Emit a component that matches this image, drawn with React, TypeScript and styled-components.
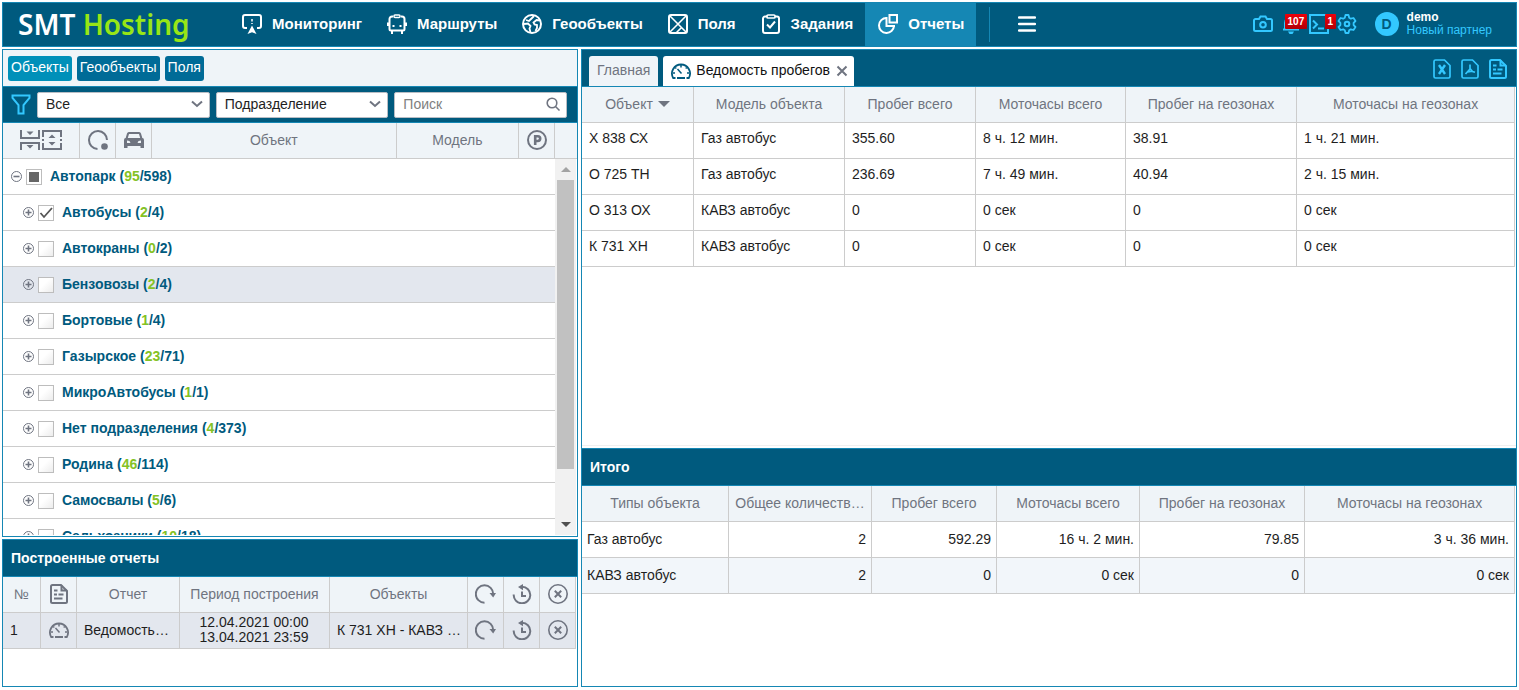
import React, { useEffect, useRef } from "react";
import styled, { createGlobalStyle, css } from "styled-components";

const c = {
  dark: "#005a7e",
  line: "#1587b4",
  head: "#eff4f8",
  grid: "#cccccc",
  mute: "#6f7480",
  sky: "#33c8ff",
  green: "#84c225",
};

const GlobalStyle = createGlobalStyle`
  *, *::before, *::after { box-sizing: border-box; }
  body {
    margin: 0;
    background: #fff;
    color: #1e1e1e;
    font: 14px/16px "Liberation Sans", Arial, sans-serif;
  }
  button, input, select { font: inherit; margin: 0; }
`;

/* ---------- layout ---------- */

const Page = styled.div`
  display: flex;
  flex-direction: column;
  gap: 2px;
  height: 100vh;
  min-height: 560px;
  padding: 2px 2px 3px;
`;

const Columns = styled.main`
  flex: 1;
  min-height: 0;
  display: grid;
  grid-template-columns: 8fr 13fr;
  gap: 3px;
`;

const Column = styled.div`
  display: flex;
  flex-direction: column;
  gap: 2px;
  min-width: 0;
  min-height: 0;
`;

const Panel = styled.section<{ $grow?: boolean }>`
  display: flex;
  flex-direction: column;
  min-width: 0;
  min-height: ${(p) => (p.$grow ? "0" : "148px")};
  flex: ${(p) => (p.$grow ? "1 1 0" : "none")};
  border: 1px solid ${c.line};
  background: #fff;
`;

const PanelTitle = styled.h2`
  margin: 0;
  padding: 0 8px;
  background: ${c.dark};
  border-bottom: 1px solid ${c.line};
  color: #fff;
  font-size: 14px;
  font-weight: bold;
  line-height: 36px;
`;

/* ---------- header ---------- */

const Header = styled.header`
  display: flex;
  align-items: stretch;
  height: 45px;
  background: ${c.dark};
  border: 1px solid ${c.line};
`;

const Logo = styled.a`
  width: 226px;
  padding-left: 15px;
  color: #fff;
  font: 600 28px/42px "Noto Sans", sans-serif;
  text-decoration: none;
  white-space: nowrap;

  span { color: #97e616; }
`;

const Nav = styled.nav`
  display: flex;
`;

const NavItem = styled.a<{ $active?: boolean }>`
  display: flex;
  align-items: center;
  gap: 10px;
  padding: 0 12px 2px 13px;
  background: ${(p) => (p.$active ? c.line : "transparent")};
  color: #fff;
  font-size: 15px;
  font-weight: bold;
  line-height: 20px;
  text-decoration: none;
`;

const Divider = styled.span`
  width: 1px;
  margin: 4px 0 4px 13px;
  background: ${c.line};
`;

const IconButton = styled.button<{ $color?: string }>`
  position: relative;
  display: flex;
  align-items: center;
  justify-content: center;
  padding: 0;
  border: 0;
  background: none;
  color: ${(p) => p.$color || c.sky};
  cursor: pointer;
`;

const MenuButton = styled(IconButton)`
  margin: 0 0 2px 28px;
`;

const Tools = styled.div`
  display: flex;
  align-items: center;
  gap: 8px;
  margin-left: auto;
  padding-bottom: 2px;
`;

const Badge = styled.span<{ $left: number }>`
  position: absolute;
  left: ${(p) => p.$left}px;
  top: 0;
  padding: 0 3px;
  border-radius: 1px;
  background: linear-gradient(#f0000a, #b00006);
  color: #fff;
  font-size: 10px;
  font-weight: bold;
  line-height: 15px;
`;

const Profile = styled.a`
  display: flex;
  align-items: center;
  gap: 8px;
  margin: 0 24px 0 18px;
  padding-bottom: 2px;
  color: ${c.sky};
  font-size: 12px;
  line-height: 13px;
  text-decoration: none;

  strong { display: block; color: #fff; }
`;

const Avatar = styled.span`
  width: 24px;
  height: 24px;
  border-radius: 50%;
  background: ${c.sky};
  color: ${c.dark};
  font-size: 14px;
  font-weight: bold;
  line-height: 24px;
  text-align: center;
`;

/* ---------- objects panel ---------- */

const TabStrip = styled.div`
  display: flex;
  gap: 5px;
  padding: 6px 5px 5px;
  background: ${c.head};
  border-bottom: 1px solid ${c.line};
`;

const PillTab = styled.button<{ $active?: boolean }>`
  height: 25px;
  padding: 0 3px 3px;
  border: 0;
  border-radius: 3px;
  background: ${(p) => (p.$active ? "#0090b9" : "#006b97")};
  color: #fff;
  line-height: 22px;
  cursor: pointer;
`;

const FilterBar = styled.div`
  display: flex;
  align-items: center;
  gap: 6px;
  height: 36px;
  padding: 0 10px 0 8px;
  background: ${c.dark};
  border-bottom: 1px solid ${c.line};
`;

const Field = styled.label`
  position: relative;
  flex: 1 1 0;
  min-width: 0;
  color: ${c.mute};

  svg {
    position: absolute;
    right: 6px;
    top: 4px;
    pointer-events: none;
  }
`;

const fieldBox = css`
  display: block;
  width: 100%;
  height: 26px;
  padding: 0 24px 2px 8px;
  border: 1px solid #b9bdc4;
  border-radius: 2px;
  background: #fff;
  color: #1e1e1e;
  appearance: none;
`;

const Select = styled.select`${fieldBox}`;
const Search = styled.input`
  ${fieldBox}
  &::placeholder { color: #808080; opacity: 1; }
`;

const TreeHead = styled.div`
  display: grid;
  grid-template-columns: 77px 36px 36px 2fr 1fr 36px 22px;
  height: 36px;
  background: ${c.head};
  border-bottom: 1px solid ${c.grid};
  color: ${c.mute};
`;

const TreeHeadCell = styled.div`
  display: flex;
  align-items: center;
  justify-content: center;
  padding-bottom: 2px;
  border-right: 1px solid ${c.grid};

  &:last-child { border-right: 0; }
`;

const TreeArea = styled.div`
  flex: 1;
  min-height: 0;
  display: flex;
  padding: 0 1px 1px 0;
`;

const Tree = styled.ul`
  flex: 1;
  margin: 0;
  padding: 0;
  overflow: hidden;
  list-style: none;
`;

const TreeRow = styled.li<{ $level: number; $hover?: boolean }>`
  display: flex;
  align-items: center;
  gap: 4px;
  height: 36px;
  padding-left: ${(p) => 8 + p.$level * 12}px;
  border-bottom: 1px solid ${c.grid};
  background: ${(p) => (p.$hover ? "#e3e7ee" : "#fff")};
`;

const TreeLabel = styled.label`
  display: flex;
  align-items: center;
  gap: 8px;
  color: ${c.dark};
  font-weight: bold;

  span { padding-bottom: 2px; }
  em { color: ${c.green}; font-style: normal; }
`;

const CheckBox = styled.input`
  width: 16px;
  height: 16px;
  border: 1px solid #bdbdbd;
  background: linear-gradient(135deg, #fff 40%, #ececec);
  appearance: none;

  &:checked {
    background: url("data:image/svg+xml,%3Csvg xmlns='http://www.w3.org/2000/svg' viewBox='0 0 14 14'%3E%3Cpath d='M1.5 7l3.5 4L13 2' fill='none' stroke='%23555' stroke-width='1.8'/%3E%3C/svg%3E");
  }
  &:indeterminate {
    background: linear-gradient(#666, #666) center / 10px 10px no-repeat #fff;
  }
`;

const ScrollTrack = styled.div`
  display: flex;
  flex-direction: column;
  width: 21px;
  padding: 0 2px;
  background: #f1f1f1;
`;

const ScrollArrow = styled.span<{ $down?: boolean }>`
  height: 21px;
  display: flex;
  align-items: center;
  justify-content: center;

  &::after {
    content: "";
    border: 5px solid transparent;
    ${(p) =>
      p.$down
        ? "border-top-color: #505050; border-bottom: 0;"
        : "border-bottom-color: #a3a3a3; border-top: 0;"}
  }
`;

const ScrollThumb = styled.span`
  flex: 13;
  background: #c1c1c1;
`;

const ScrollRest = styled.span`
  flex: 2;
`;

/* ---------- tables ---------- */

const Table = styled.table`
  width: calc(100% - 1px);
  border-collapse: separate;
  border-spacing: 0;
  table-layout: fixed;
`;

const cell = css`
  height: 36px;
  border-right: 1px solid ${c.grid};
  border-bottom: 1px solid ${c.grid};
  overflow: hidden;
  text-overflow: ellipsis;
  white-space: nowrap;

  svg { display: block; margin: 0 auto; }
  button { margin: 0 auto; }
`;

const Th = styled.th`
  ${cell}
  padding: 0 5px 2px;
  background: ${c.head};
  color: ${c.mute};
  font-weight: normal;
  text-align: center;
`;

const SortMark = styled.span`
  display: inline-block;
  margin-left: 5px;
  border: 6px solid transparent;
  border-top-color: ${c.mute};
  border-bottom: 0;
  vertical-align: 2px;
`;

const Td = styled.td<{ $align?: string; $tight?: boolean; $raised?: boolean }>`
  ${cell}
  padding: ${(p) => (p.$raised ? "0 7px 5px" : p.$tight ? "0 5px 2px" : "0 8px 2px 7px")};
  text-align: ${(p) => p.$align || "left"};
  color: #1e1e1e;
`;

const ObjectsTd = styled(Td)`
  padding-right: 5px;
`;

const IconTd = styled(Td)`
  padding: 0 0 2px;
  color: ${c.mute};
`;

const IconTh = styled(Th)`
  padding: 0 0 2px;
`;

const Row = styled.tr<{ $bg?: string }>`
  background: ${(p) => p.$bg || "#fff"};
`;

const Period = styled.div`
  line-height: 15px;
`;

/* ---------- report panel ---------- */

const ReportBar = styled.div`
  display: flex;
  align-items: flex-end;
  gap: 5px;
  height: 37px;
  padding: 0 8px 0 7px;
  background: ${c.dark};
  border-bottom: 1px solid ${c.line};
`;

const ReportTab = styled.div<{ $active?: boolean }>`
  display: flex;
  align-items: center;
  gap: 5px;
  height: 30px;
  padding: 0 ${(p) => (p.$active ? 5 : 8)}px 0 8px;
  border-radius: 3px 3px 0 0;
  background: ${(p) => (p.$active ? "#fff" : c.head)};
  color: ${(p) => (p.$active ? c.dark : c.mute)};
`;

const TabButton = styled.button<{ $active?: boolean }>`
  padding: 0 0 2px;
  border: 0;
  background: none;
  color: ${(p) => (p.$active ? "#111" : c.mute)};
  cursor: pointer;
`;

const Exports = styled.div`
  display: flex;
  gap: 8px;
  margin: 0 0 7px auto;
`;

const ReportBody = styled.div`
  flex: 1;
  min-height: 0;
  margin-bottom: 2px;
  border-bottom: 1px solid #f0f0f0;
  overflow: hidden;
`;

const Totals = styled.div`
  min-height: 238px;
  border-top: 1px solid ${c.line};
`;

/* ---------- icons ---------- */

type IconProps = { w?: number; h?: number; sw?: number; children: React.ReactNode };
const Icon = ({ w = 20, h = 20, sw = 2, children }: IconProps) => (
  <svg width={w} height={h} viewBox={`0 0 ${w} ${h}`} fill="none" stroke="currentColor" strokeWidth={sw} aria-hidden="true">
    {children}
  </svg>
);

const MonitorIcon = () => (
  <Icon>
    <path d="M5 14H3a2 2 0 0 1-2-2V3a2 2 0 0 1 2-2h14a2 2 0 0 1 2 2v9a2 2 0 0 1-2 2h-2" />
    <path d="M10 5v2.500M10 9v1" strokeWidth="1.500" />
    <path d="M10 11.500l4.500 8.500L10 18.200 5.500 20z" fill="currentColor" stroke="none" />
  </Icon>
);
const BusIcon = () => (
  <Icon>
    <path d="M6 2.500H5A2.500 2.500 0 0 0 2.500 5v10A1.500 1.500 0 0 0 4 16.500h12a1.500 1.500 0 0 0 1.500-1.500V5A2.500 2.500 0 0 0 15 2.500h-1" />
    <rect x="7" y="1" width="6" height="2.500" rx="1" strokeWidth="1.600" />
    <path d="M1 8.500v3.500M19 8.500v3.500M5 17v3M15 17v3" />
    <path d="M5.500 12h2M12.500 12h2" />
  </Icon>
);
const GlobeIcon = () => (
  <Icon>
    <circle cx="10" cy="10" r="9" />
    <path
      d="M2 10l4-.5 2.500 2.500-1 2.500 1 4M4 6l3 1 2.500-2.500L12 2M18 6.500l-3.500-.5-3 2.500 1 2 2.500.5v3l-1.500 3"
      strokeWidth="1.800"
    />
  </Icon>
);
const FieldIcon = () => (
  <Icon>
    <rect x="1" y="1" width="18" height="18" rx="2" />
    <path d="M2 2l16 16M18 2L2 18M8.500 18.500l5-5" strokeWidth="1.600" />
  </Icon>
);
const TaskIcon = () => (
  <Icon>
    <path d="M6 2.500H4A2 2 0 0 0 2 4.500V17a2 2 0 0 0 2 2h12a2 2 0 0 0 2-2V4.500a2 2 0 0 0-2-2h-2" />
    <rect x="6" y="1" width="8" height="3" rx="1" strokeWidth="1.700" />
    <path d="M6 10.500l3 3 5-6" />
  </Icon>
);
const PieIcon = () => (
  <Icon>
    <path d="M8.500 4A7.500 7.500 0 1 0 16 12" />
    <path d="M8.500 3v9H17" />
    <path d="M11.500 1H19v7.500h-7.500z" />
  </Icon>
);
const BurgerIcon = () => (
  <Icon w={18} h={18}>
    <path d="M1 2.500h16M1 9h16M1 15.500h16" strokeLinecap="round" strokeWidth="2.400" />
  </Icon>
);
const CameraIcon = () => (
  <Icon>
    <path d="M2.500 5H6l1.500-2.500h5L14 5h3.500A1.500 1.500 0 0 1 19 6.500v9a1.500 1.500 0 0 1-1.500 1.500h-15A1.500 1.500 0 0 1 1 15.500v-9A1.500 1.500 0 0 1 2.500 5z" />
    <circle cx="10" cy="10.800" r="2.800" />
  </Icon>
);
const BellIcon = () => (
  <Icon>
    <path d="M2 15.500h16M4 15V9a6 6 0 0 1 12 0v6" />
    <path d="M7 17.500h6L11.500 20h-3z" fill="currentColor" stroke="none" />
  </Icon>
);
const TerminalIcon = () => (
  <Icon>
    <rect x="1" y="1" width="18" height="18" />
    <path d="M4 6.500l4 4-4 4M9 14.500h6" />
  </Icon>
);
const GearIcon = () => (
  <Icon>
    <circle cx="10" cy="10" r="2.300" />
    <path
      strokeLinejoin="round"
      strokeWidth="1.800"
      d="M8.500 1h3l.7 2.800 1.600.9L16.500 4 18.500 7l-1.900 1.900v2.200l1.900 1.900-2 3-2.700-.7-1.600.9-.7 2.800h-3l-.7-2.800-1.600-.9-2.700.7-2-3 1.900-1.900V8.900L1.500 7l2-3 2.700.7 1.600-.9z"
    />
  </Icon>
);
const FunnelIcon = () => (
  <Icon w={20} h={21}>
    <path d="M1.500 1.500h17v2.300L12.500 11v8.500h-5V11L1.500 3.800z" />
  </Icon>
);
const ChevronIcon = () => (
  <Icon w={14} h={16}>
    <path d="M2 5.500l5 4.500 5-4.500" />
  </Icon>
);
const SearchIcon = () => (
  <Icon w={16} h={16} sw={1.6}>
    <circle cx="7" cy="7" r="4.800" />
    <path d="M10.500 10.500l4 4" />
  </Icon>
);
const CollapseIcon = () => (
  <Icon w={42} h={20}>
    <path d="M1 0v8h18V0M1 20v-7h18v7" />
    <path d="M6.500 1.500h7L10 5zM6.500 15h7L10 18.500z" fill="currentColor" stroke="none" />
    <path d="M23 7V1h18v6M23 13v6h18v-6M22 10h2M40 10h2" />
    <path d="M28.500 8h7L32 4.500zM28.500 12h7L32 15.500z" fill="currentColor" stroke="none" />
  </Icon>
);
const StateIcon = () => (
  <Icon>
    <path d="M9.500 19A9 9 0 1 1 19 10" />
    <circle cx="16.500" cy="16.500" r="3.300" fill="currentColor" stroke="none" />
  </Icon>
);
const CarIcon = () => (
  <Icon h={18}>
    <path
      d="M5 1h10a2 2 0 0 1 2 1.500L18.300 7A2 2 0 0 1 20 9v8h-3.500v-2h-13v2H0V9a2 2 0 0 1 1.700-2L3 2.500A2 2 0 0 1 5 1zM5 3L3.800 7h12.400L15 3zM3 9.500V12h3.500l-1-2zM17 9.500l-2.500.5-1 2H17z"
      fill="currentColor"
      fillRule="evenodd"
      stroke="none"
    />
  </Icon>
);
const ParkingIcon = () => (
  <Icon>
    <circle cx="10" cy="10" r="9" />
    <path d="M8.200 15V6.200h2.600a2.400 2.400 0 0 1 0 4.800H8.500" strokeWidth="2.600" />
  </Icon>
);
const ExpandIcon = ({ open }: { open?: boolean }) => (
  <Icon w={11} h={11} sw={1}>
    <circle cx="5.500" cy="5.500" r="5" />
    <path d={open ? "M2.500 5.500h6" : "M2.500 5.500h6M5.500 2.500v6"} strokeWidth="1.600" />
  </Icon>
);
const DocIcon = () => (
  <Icon>
    <path d="M12 1H3.500A1.500 1.500 0 0 0 2 2.500v15A1.500 1.500 0 0 0 3.500 19h13a1.500 1.500 0 0 0 1.500-1.500V7z" />
    <path d="M12.500 1v5.500H18M5 6.500h3.500M5 10.500h3M9.500 10.500h5M5 14.500h8.500" />
  </Icon>
);
const ExcelIcon = () => (
  <Icon>
    <path d="M12.500 1h-9A1.500 1.500 0 0 0 2 2.500v15A1.500 1.500 0 0 0 3.500 19h13a1.500 1.500 0 0 0 1.500-1.500v-11z" strokeWidth="1.700" />
    <path d="M7 6l6 9M13 6l-6 9" strokeWidth="2.400" />
  </Icon>
);
const PdfIcon = () => (
  <Icon>
    <path d="M12.500 1h-9A1.500 1.500 0 0 0 2 2.500v15A1.500 1.500 0 0 0 3.500 19h13a1.500 1.500 0 0 0 1.500-1.500v-11z" strokeWidth="1.700" />
    <path d="M10 5.500v4.500L5.500 15M10 9.500l2.500 3 2.500.8M7.500 13l5-.8" strokeWidth="1.700" />
  </Icon>
);
const GaugeIcon = () => (
  <Icon h={16} sw={1.8}>
    <path d="M4.500 15H2.200A9 9 0 1 1 17.800 15H15.500" />
    <path d="M10 2v2.500M4.300 4.500l1 1M15.700 4.500l-1 1M2 10h2M16 10h2M6.500 6l4 4.500" strokeWidth="1.500" />
    <path d="M6 15h8" strokeWidth="2" />
  </Icon>
);
const RepeatIcon = () => (
  <Icon w={21}>
    <path d="M9.500 18.700A8.700 8.700 0 1 1 18.200 10" />
    <path d="M14.500 9h6.500l-2.800 4.500z" fill="currentColor" stroke="none" />
  </Icon>
);
const HistoryIcon = () => (
  <Icon>
    <path d="M1.700 10.500A8.300 8.300 0 1 0 10 2.700M10 7.500V12h4" />
    <path d="M11 0v6.200L6 3z" fill="currentColor" stroke="none" />
  </Icon>
);
const RemoveIcon = () => (
  <Icon>
    <circle cx="10" cy="10" r="9.200" strokeWidth="1.600" />
    <path d="M6.800 6.800l6.400 6.400M13.200 6.800l-6.400 6.400" />
  </Icon>
);
const CloseIcon = () => (
  <Icon w={14} h={12}>
    <path d="M2.500 1.500l9 9M11.500 1.500l-9 9" />
  </Icon>
);

/* ---------- data ---------- */

const nav = [
  { text: "Мониторинг", icon: <MonitorIcon /> },
  { text: "Маршруты", icon: <BusIcon /> },
  { text: "Геообъекты", icon: <GlobeIcon /> },
  { text: "Поля", icon: <FieldIcon /> },
  { text: "Задания", icon: <TaskIcon /> },
  { text: "Отчеты", icon: <PieIcon />, active: true },
];

const groups = [
  { name: "Автобусы", on: 2, all: 4, checked: true },
  { name: "Автокраны", on: 0, all: 2 },
  { name: "Бензовозы", on: 2, all: 4, hover: true },
  { name: "Бортовые", on: 1, all: 4 },
  { name: "Газырское", on: 23, all: 71 },
  { name: "МикроАвтобусы", on: 1, all: 1 },
  { name: "Нет подразделения", on: 4, all: 373 },
  { name: "Родина", on: 46, all: 114 },
  { name: "Самосвалы", on: 5, all: 6 },
  { name: "Сельхозники", on: 10, all: 18 },
];

const mileage = [
  ["Х 838 СХ", "Газ автобус", "355.60", "8 ч. 12 мин.", "38.91", "1 ч. 21 мин."],
  ["О 725 ТН", "Газ автобус", "236.69", "7 ч. 49 мин.", "40.94", "2 ч. 15 мин."],
  ["О 313 ОХ", "КАВЗ автобус", "0", "0 сек", "0", "0 сек"],
  ["К 731 ХН", "КАВЗ автобус", "0", "0 сек", "0", "0 сек"],
];
const mileageCols = [112, 151, 131, 150, 171, 218];

const totalsHead = ["Типы объекта", "Общее количеств…", "Пробег всего", "Моточасы всего", "Пробег на геозонах", "Моточасы на геозонах"];
const totals = [
  ["Газ автобус", "2", "592.29", "16 ч. 2 мин.", "79.85", "3 ч. 36 мин."],
  ["КАВЗ автобус", "2", "0", "0 сек", "0", "0 сек"],
];
const totalsCols = [147, 143, 125, 143, 165, 210];
const builtCols = [38, 36, 103, 150, 138, 36, 36, 36];

const Cols = ({ widths }: { widths: number[] }) => (
  <colgroup>
    {widths.map((w, i) => (
      <col key={i} width={w} />
    ))}
  </colgroup>
);

type GroupProps = { name: string; on: number; all: number; level: number; checked?: boolean; mixed?: boolean; hover?: boolean };

const Group = ({ name, on, all, level, checked, mixed, hover }: GroupProps) => {
  const box = useRef<HTMLInputElement>(null);
  useEffect(() => {
    if (box.current) box.current.indeterminate = Boolean(mixed);
  }, [mixed]);
  return (
    <TreeRow $level={level} $hover={hover}>
      <IconButton type="button" $color={c.mute} aria-label={mixed ? "Свернуть" : "Развернуть"}>
        <ExpandIcon open={mixed} />
      </IconButton>
      <TreeLabel>
        <CheckBox ref={box} type="checkbox" defaultChecked={checked} />
        <span>
          {name} (<em>{on}</em>/{all})
        </span>
      </TreeLabel>
    </TreeRow>
  );
};

export default function App() {
  return (
    <Page>
      <GlobalStyle />
      <Header>
        <Logo href="#">
          SMT <span>Hosting</span>
        </Logo>
        <Nav>
          {nav.map((n) => (
            <NavItem key={n.text} href="#" $active={n.active}>
              {n.icon}
              {n.text}
            </NavItem>
          ))}
        </Nav>
        <Divider />
        <MenuButton type="button" $color="#fff" aria-label="Меню">
          <BurgerIcon />
        </MenuButton>
        <Tools>
          <IconButton type="button" aria-label="Снимок"><CameraIcon /></IconButton>
          <IconButton type="button" aria-label="Уведомления">
            <BellIcon />
            <Badge $left={4}>107</Badge>
          </IconButton>
          <IconButton type="button" aria-label="Команды">
            <TerminalIcon />
            <Badge $left={16}>1</Badge>
          </IconButton>
          <IconButton type="button" aria-label="Настройки"><GearIcon /></IconButton>
        </Tools>
        <Profile href="#">
          <Avatar>D</Avatar>
          <span>
            <strong>demo</strong>
            Новый партнер
          </span>
        </Profile>
      </Header>

      <Columns>
        <Column>
          <Panel $grow>
            <TabStrip>
              <PillTab type="button" $active>Объекты</PillTab>
              <PillTab type="button">Геообъекты</PillTab>
              <PillTab type="button">Поля</PillTab>
            </TabStrip>
            <FilterBar>
              <IconButton type="button" aria-label="Фильтр"><FunnelIcon /></IconButton>
              <Field>
                <Select aria-label="Статус"><option>Все</option></Select>
                <ChevronIcon />
              </Field>
              <Field>
                <Select aria-label="Группировка"><option>Подразделение</option></Select>
                <ChevronIcon />
              </Field>
              <Field>
                <Search type="text" placeholder="Поиск" aria-label="Поиск" />
                <SearchIcon />
              </Field>
            </FilterBar>
            <TreeHead>
              <TreeHeadCell><CollapseIcon /></TreeHeadCell>
              <TreeHeadCell><StateIcon /></TreeHeadCell>
              <TreeHeadCell><CarIcon /></TreeHeadCell>
              <TreeHeadCell>Объект</TreeHeadCell>
              <TreeHeadCell>Модель</TreeHeadCell>
              <TreeHeadCell><ParkingIcon /></TreeHeadCell>
              <TreeHeadCell />
            </TreeHead>
            <TreeArea>
              <Tree>
                <Group name="Автопарк" on={95} all={598} level={0} mixed />
                {groups.map((g) => (
                  <Group key={g.name} {...g} level={1} />
                ))}
              </Tree>
              <ScrollTrack>
                <ScrollArrow />
                <ScrollThumb />
                <ScrollRest />
                <ScrollArrow $down />
              </ScrollTrack>
            </TreeArea>
          </Panel>

          <Panel>
            <PanelTitle>Построенные отчеты</PanelTitle>
            <Table>
              <Cols widths={builtCols} />
              <thead>
                <tr>
                  <Th>№</Th>
                  <IconTh><DocIcon /></IconTh>
                  <Th>Отчет</Th>
                  <Th>Период построения</Th>
                  <Th>Объекты</Th>
                  <IconTh><RepeatIcon /></IconTh>
                  <IconTh><HistoryIcon /></IconTh>
                  <IconTh><RemoveIcon /></IconTh>
                </tr>
              </thead>
              <tbody>
                <Row $bg="#e3e7ee">
                  <Td>1</Td>
                  <IconTd><GaugeIcon /></IconTd>
                  <Td>Ведомость пробегов</Td>
                  <Td $align="center">
                    <Period>12.04.2021 00:00</Period>
                    <Period>13.04.2021 23:59</Period>
                  </Td>
                  <ObjectsTd>К 731 ХН - КАВЗ автобус</ObjectsTd>
                  <IconTd><IconButton type="button" $color={c.mute} aria-label="Повторить"><RepeatIcon /></IconButton></IconTd>
                  <IconTd><IconButton type="button" $color={c.mute} aria-label="История"><HistoryIcon /></IconButton></IconTd>
                  <IconTd><IconButton type="button" $color={c.mute} aria-label="Удалить"><RemoveIcon /></IconButton></IconTd>
                </Row>
              </tbody>
            </Table>
          </Panel>
        </Column>

        <Panel $grow>
          <ReportBar>
            <ReportTab>
              <TabButton type="button">Главная</TabButton>
            </ReportTab>
            <ReportTab $active>
              <GaugeIcon />
              <TabButton type="button" $active>Ведомость пробегов</TabButton>
              <IconButton type="button" $color={c.mute} aria-label="Закрыть"><CloseIcon /></IconButton>
            </ReportTab>
            <Exports>
              <IconButton type="button" aria-label="Excel"><ExcelIcon /></IconButton>
              <IconButton type="button" aria-label="PDF"><PdfIcon /></IconButton>
              <IconButton type="button" aria-label="Отчет"><DocIcon /></IconButton>
            </Exports>
          </ReportBar>
          <ReportBody>
            <Table>
              <Cols widths={mileageCols} />
              <thead>
                <tr>
                  <Th>Объект<SortMark /></Th>
                  <Th>Модель объекта</Th>
                  <Th>Пробег всего</Th>
                  <Th>Моточасы всего</Th>
                  <Th>Пробег на геозонах</Th>
                  <Th>Моточасы на геозонах</Th>
                </tr>
              </thead>
              <tbody>
                {mileage.map((r) => (
                  <Row key={r[0]}>
                    {r.map((v, i) => (
                      <Td key={i} $raised>{v}</Td>
                    ))}
                  </Row>
                ))}
              </tbody>
            </Table>
          </ReportBody>
          <Totals>
            <PanelTitle>Итого</PanelTitle>
            <Table>
              <Cols widths={totalsCols} />
              <thead>
                <tr>
                  {totalsHead.map((t) => (
                    <Th key={t}>{t}</Th>
                  ))}
                </tr>
              </thead>
              <tbody>
                {totals.map((r, n) => (
                  <Row key={r[0]} $bg={n % 2 ? "#f2f6fa" : "#fff"}>
                    {r.map((v, i) => (
                      <Td key={i} $tight $align={i ? "right" : "left"}>{v}</Td>
                    ))}
                  </Row>
                ))}
              </tbody>
            </Table>
          </Totals>
        </Panel>
      </Columns>
    </Page>
  );
}
